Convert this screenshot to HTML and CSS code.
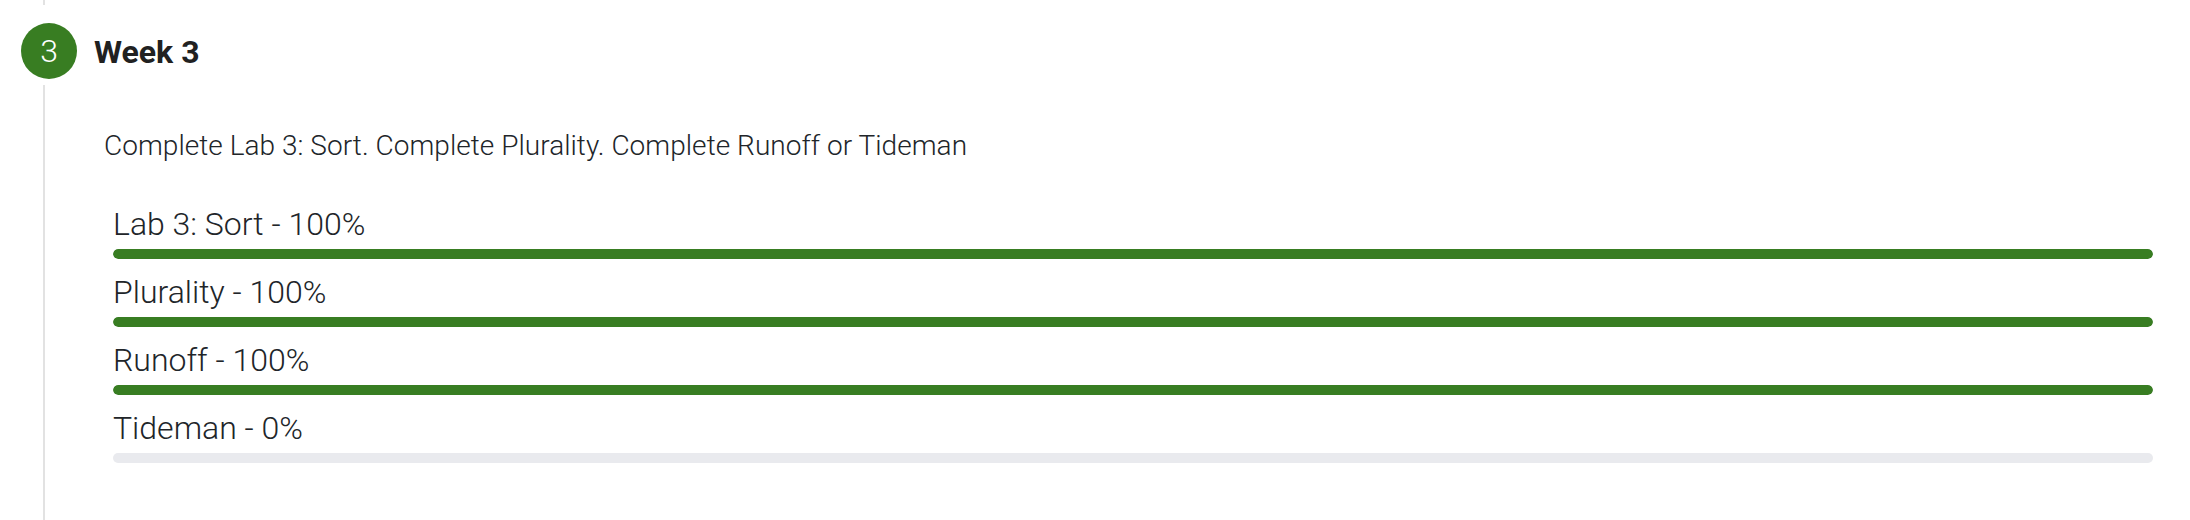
FILE: index.html
```html
<!DOCTYPE html>
<html lang="en">
<head>
<meta charset="utf-8">
<title>Week 3</title>
<link rel="stylesheet" href="styles.css">
</head>
<body>
<div class="timeline">
  <div class="line-top"></div>
  <div class="header">
    <div class="step">3</div>
    <h3 class="title">Week 3</h3>
  </div>
  <div class="body">
    <p class="desc">Complete Lab 3: Sort. Complete Plurality. Complete Runoff or Tideman</p>
    <div class="rows">
      <div class="row">
        <div class="label">Lab 3: Sort - 100%</div>
        <div class="track"><div class="fill" style="width:100%"></div></div>
      </div>
      <div class="row">
        <div class="label">Plurality - 100%</div>
        <div class="track"><div class="fill" style="width:100%"></div></div>
      </div>
      <div class="row">
        <div class="label">Runoff - 100%</div>
        <div class="track"><div class="fill" style="width:100%"></div></div>
      </div>
      <div class="row">
        <div class="label">Tideman - 0%</div>
        <div class="track"><div class="fill" style="width:0%"></div></div>
      </div>
    </div>
  </div>
</div>
</body>
</html>
```

FILE: styles.css
```css
html, body {
  margin: 0;
  padding: 0;
  background: #ffffff;
}
body {
  font-family: Roboto, "Liberation Sans", Arial, sans-serif;
  color: #212529;
  height: 520px;
  overflow: hidden;
}
.timeline {
  display: flex;
  flex-direction: column;
  height: 520px;
}
.line-top {
  width: 2px;
  height: 5px;
  margin-left: 43px;
  background: #e2e2e2;
}
.header {
  display: flex;
  align-items: center;
  margin-top: 18px;
  height: 56px;
}
.step {
  width: 56px;
  height: 56px;
  margin-left: 21px;
  border-radius: 50%;
  background: #387d22;
  color: #ffffff;
  font-size: 32px;
  font-weight: 300;
  display: flex;
  align-items: center;
  justify-content: center;
  flex: none;
}
.title {
  margin: 0 0 0 17px;
  padding-top: 3px;
  font-size: 32px;
  font-weight: 700;
  color: #212121;
  line-height: 1.2;
}
.body {
  flex: 1;
  margin-top: 6px;
  margin-left: 43px;
  border-left: 2px solid #e2e2e2;
  padding-left: 59px;
  padding-right: 37px;
  padding-top: 40px;
}
.desc {
  margin: 0;
  font-size: 28px;
  font-weight: 300;
  line-height: 42px;
  letter-spacing: 0.04px;
}
.rows {
  margin-top: 33px;
  margin-left: 9px;
  display: flex;
  flex-direction: column;
}
.row {
  display: flex;
  flex-direction: column;
  padding-bottom: 9px;
}
.label {
  font-size: 32px;
  font-weight: 300;
  line-height: 48px;
}
.track {
  margin-top: 1px;
  height: 10px;
  border-radius: 5px;
  background: #e9eaee;
  overflow: hidden;
}
.fill {
  height: 100%;
  background: #387d22;
  border-radius: 5px;
}
```
